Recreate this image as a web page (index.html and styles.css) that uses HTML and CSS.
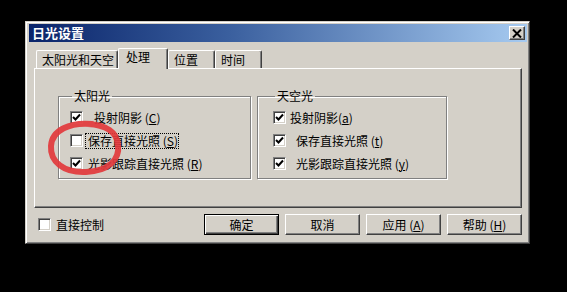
FILE: index.html
```html
<!doctype html>
<html>
<head>
<meta charset="utf-8">
<title>日光设置</title>
<link rel="stylesheet" href="styles.css">
</head>
<body>
<div class="dialog">
  <div class="titlebar">
    <span class="title">日光设置</span>
    <span class="close">
      <svg width="10" height="9" viewBox="0 0 10 9"><path d="M1 0.5 L9 8.5 M9 0.5 L1 8.5" stroke="#000" stroke-width="2"/></svg>
    </span>
  </div>
  <div class="content">
    <div class="tabs">
      <div class="tab t1">太阳光和天空</div>
      <div class="tab t2 active">处理</div>
      <div class="tab t3">位置</div>
      <div class="tab t4">时间</div>
    </div>
    <div class="panel">
      <fieldset class="group sun">
        <legend>太阳光</legend>
        <div class="row"><span class="cb on"></span><span class="lbl g11">投射阴影 (<u>C</u>)</span></div>
        <div class="row"><span class="cb"></span><span class="lbl g5 focus">保存直接光照 (<u>S</u>)</span></div>
        <div class="row"><span class="cb on"></span><span class="lbl g5">光影跟踪直接光照 (<u>R</u>)</span></div>
      </fieldset>
      <fieldset class="group sky">
        <legend>天空光</legend>
        <div class="row"><span class="cb on"></span><span class="lbl g4">投射阴影(<u>a</u>)</span></div>
        <div class="row"><span class="cb on"></span><span class="lbl g10">保存直接光照 (<u>t</u>)</span></div>
        <div class="row"><span class="cb on"></span><span class="lbl g10">光影跟踪直接光照 (<u>y</u>)</span></div>
      </fieldset>
    </div>
    <div class="footer">
      <div class="direct"><span class="cb"></span><span class="lbl g5">直接控制</span></div>
      <div class="buttons">
        <button class="btn default">确定</button>
        <button class="btn">取消</button>
        <button class="btn">应用 (<u>A</u>)</button>
        <button class="btn">帮助 (<u>H</u>)</button>
      </div>
    </div>
  </div>
</div>
<svg class="mark" width="567" height="292" viewBox="0 0 567 292">
  <path d="M92 124 C70 122 52 130 51 146 C50 162 64 173 86 172 C108 171 120 160 118 145 C117 132 106 125 88 124" fill="none" stroke="#e2383c" stroke-width="6" stroke-linecap="round" opacity="0.92"/>
</svg>
<script>
  // tick marks for checked boxes
  var boxes = document.querySelectorAll('.cb.on');
  for (var i = 0; i < boxes.length; i++)
  {
    boxes[i].innerHTML = '<svg width="9" height="9" viewBox="0 0 9 9"><path d="M1 4 L3.5 6.5 L8 1.5" fill="none" stroke="#000" stroke-width="2"/></svg>';
  }
</script>
</body>
</html>
```

FILE: styles.css
```css
body {
	margin: 0;
	padding: 21px 0 0 25px;
	background: #000;
	width: 567px;
	height: 292px;
	box-sizing: border-box;
	font-family: "Noto Sans CJK SC", sans-serif;
	font-size: 12px;
	color: #000;
	overflow: hidden;
}
.dialog {
	width: 505px;
	height: 223px;
	box-sizing: border-box;
	background: #d4d0c8;
	border: 1px solid;
	border-color: #d4d0c8 #404040 #404040 #d4d0c8;
	box-shadow: inset 1px 1px #fff, inset -1px -1px #808080;
	padding: 2px 2px 0 3px;
}
.titlebar {
	height: 18px;
	display: flex;
	align-items: center;
	justify-content: space-between;
	background: linear-gradient(to right, #0a246a, #3a5f9e 40%, #a6caf0);
	padding: 0 2px 0 3px;
}
.title {
	color: #fff;
	font-weight: bold;
	font-size: 13px;
	line-height: 18px;
}
.close {
	width: 16px;
	height: 14px;
	box-sizing: border-box;
	background: #d4d0c8;
	border: 1px solid;
	border-color: #fff #404040 #404040 #fff;
	box-shadow: inset -1px -1px #808080;
	display: flex;
	align-items: center;
	justify-content: center;
}
.close svg {display: block;}
.content {
	padding: 6px 5px 0 5px;
}
.tabs {
	display: flex;
	align-items: flex-end;
	height: 20px;
	padding-left: 2px;
}
.tab {
	height: 18px;
	box-sizing: border-box;
	border: 1px solid;
	border-color: #fff #404040 transparent #fff;
	border-bottom: none;
	box-shadow: inset -1px 0 #808080;
	border-radius: 2px 2px 0 0;
	padding-left: 5px;
	line-height: 17px;
	white-space: nowrap;
}
.t1 {width: 82px;}
.t2 {width: 50px;}
.t3 {width: 47px;}
.t4 {width: 47px;}
.tab.active {
	height: 21px;
	position: relative;
	z-index: 1;
	margin-bottom: -1px;
	background: #d4d0c8;
	line-height: 16px;
	padding-left: 7px;
}
.panel {
	height: 140px;
	box-sizing: border-box;
	border: 1px solid;
	border-color: #fff #404040 #404040 #fff;
	box-shadow: inset -1px -1px #808080;
	padding: 20px 0 0 23px;
	display: flex;
	gap: 6px;
	align-items: flex-start;
}
.group {
	margin: 0;
	padding: 3px 0 3px 0;
	border: 1px solid #808080;
	box-shadow: inset 1px 1px #fff, 1px 1px #fff;
	min-width: 0;
}
.group legend {
	padding: 0 2px;
	margin-left: 2px;
	line-height: 14px;
}
.sun {width: 193px; padding-left: 11px; box-sizing: border-box;}
.sky {width: 190px; padding-left: 15px; box-sizing: border-box;}
.row {
	height: 23px;
	display: flex;
	align-items: center;
}
.cb {
	width: 13px;
	height: 13px;
	box-sizing: border-box;
	background: #fff;
	border: 1px solid;
	border-color: #808080 #fff #fff #808080;
	box-shadow: inset 1px 1px #404040, inset -1px -1px #d4d0c8;
	display: flex;
	align-items: center;
	justify-content: center;
	flex: none;
}
.cb svg {display: block;}
.lbl {white-space: nowrap; line-height: 14px;}
.lbl u {text-underline-offset: 1px;}
.g4 {margin-left: 4px;}
.g5 {margin-left: 5px;}
.g10 {margin-left: 10px;}
.g11 {margin-left: 11px;}
.focus {
	outline: 1px dotted #000;
	padding-left: 2px;
	margin-left: 3px;
}
.footer {
	display: flex;
	align-items: center;
	justify-content: space-between;
	padding-top: 6px;
}
.direct {
	display: flex;
	align-items: center;
	padding-left: 4px;
}
.buttons {
	display: flex;
	gap: 6px;
}
.btn {
	width: 75px;
	height: 21px;
	box-sizing: border-box;
	background: #d4d0c8;
	font: inherit;
	color: #000;
	padding: 0;
	border: 1px solid;
	border-color: #fff #404040 #404040 #fff;
	box-shadow: inset -1px -1px #808080;
	line-height: 17px;
}
.btn.default {
	border-color: #000;
	box-shadow: inset 1px 1px #fff, inset -1px -1px #404040, inset -2px -2px #808080;
}
.mark {
	position: absolute;
	left: 0;
	top: 0;
	pointer-events: none;
}
```
